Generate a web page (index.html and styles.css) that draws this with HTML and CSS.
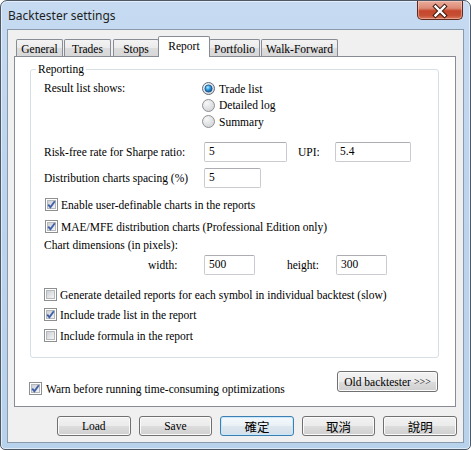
FILE: index.html
```html
<!DOCTYPE html>
<html>
<head>
<meta charset="utf-8">
<link rel="stylesheet" href="styles.css">
</head>
<body>
<div class="window">
  <div class="titlebar">
    <span class="title">Backtester settings</span>
    <div class="close">
      <svg width="46" height="19" viewBox="0 0 46 19">
        <path d="M18.5 5.5 L27.5 14.5 M27.5 5.5 L18.5 14.5" stroke="#3b1a12" stroke-width="4.4" stroke-linecap="square" fill="none"/>
        <path d="M18.5 5.5 L27.5 14.5 M27.5 5.5 L18.5 14.5" stroke="#ffffff" stroke-width="2.4" stroke-linecap="square" fill="none"/>
      </svg>
    </div>
  </div>
  <div class="client">
    <div class="tabs">
      <div class="tab t-general">General</div>
      <div class="tab t-trades">Trades</div>
      <div class="tab t-stops">Stops</div>
      <div class="tab active t-report">Report</div>
      <div class="tab t-portfolio">Portfolio</div>
      <div class="tab t-walk">Walk-Forward</div>
    </div>
    <div class="panel">
      <div class="group">
        <span class="group-label">Reporting</span>
        <div class="result">
          <div class="label-col line">Result list shows:</div>
          <div class="radios">
            <div class="radio-row"><svg class="radio" width="13" height="13" viewBox="0 0 13 13"><use href="#radio-on"/></svg><span>Trade list</span></div>
            <div class="radio-row"><svg class="radio" width="13" height="13" viewBox="0 0 13 13"><use href="#radio-off"/></svg><span>Detailed log</span></div>
            <div class="radio-row"><svg class="radio" width="13" height="13" viewBox="0 0 13 13"><use href="#radio-off"/></svg><span>Summary</span></div>
          </div>
        </div>
        <div class="field-row r-sharpe">
          <div class="label-col">Risk-free rate for Sharpe ratio:</div>
          <div class="input w-sharpe">5</div>
          <div class="upi-label">UPI:</div>
          <div class="input w-upi">5.4</div>
        </div>
        <div class="field-row r-spacing">
          <div class="label-col">Distribution charts spacing (%)</div>
          <div class="input w-spacing">5</div>
        </div>
        <div class="check-row c-enable"><svg class="cb" width="13" height="13" viewBox="0 0 13 13"><use href="#cb-on"/></svg><span>Enable user-definable charts in the reports</span></div>
        <div class="check-row c-mae"><svg class="cb" width="13" height="13" viewBox="0 0 13 13"><use href="#cb-on"/></svg><span>MAE/MFE distribution charts (Professional Edition only)</span></div>
        <div class="line dims">Chart dimensions (in pixels):</div>
        <div class="field-row r-dims">
          <div class="dim-label">width:</div>
          <div class="input w-dim">500</div>
          <div class="height-label">height:</div>
          <div class="input w-dim">300</div>
        </div>
        <div class="check-row c-generate"><svg class="cb" width="13" height="13" viewBox="0 0 13 13"><use href="#cb-off"/></svg><span>Generate detailed reports for each symbol in individual backtest (slow)</span></div>
        <div class="check-row c-trade"><svg class="cb" width="13" height="13" viewBox="0 0 13 13"><use href="#cb-on"/></svg><span>Include trade list in the report</span></div>
        <div class="check-row c-formula"><svg class="cb" width="13" height="13" viewBox="0 0 13 13"><use href="#cb-off"/></svg><span>Include formula in the report</span></div>
      </div>
      <div class="bottom-row">
        <div class="check-row c-warn"><svg class="cb" width="13" height="13" viewBox="0 0 13 13"><use href="#cb-on"/></svg><span>Warn before running time-consuming optimizations</span></div>
        <div class="btn old">Old backtester <span class="arrows">&gt;&gt;&gt;</span></div>
      </div>
    </div>
    <div class="buttons">
      <div class="btn dlg">Load</div>
      <div class="btn dlg">Save</div>
      <div class="btn dlg default cjk">確定</div>
      <div class="btn dlg cjk">取消</div>
      <div class="btn dlg cjk">說明</div>
    </div>
  </div>
</div>

<svg width="0" height="0" class="defs">
  <defs>
    <linearGradient id="cbfill" x1="0" y1="0" x2="1" y2="1">
      <stop offset="0" stop-color="#c9ccd1"/>
      <stop offset="1" stop-color="#f7f7f7"/>
    </linearGradient>
    <radialGradient id="rfill" cx="0.35" cy="0.3" r="0.8">
      <stop offset="0" stop-color="#f8f8f8"/>
      <stop offset="1" stop-color="#cfd1d4"/>
    </radialGradient>
    <radialGradient id="rdot" cx="0.4" cy="0.35" r="0.7">
      <stop offset="0" stop-color="#b9ecff"/>
      <stop offset="0.45" stop-color="#2f9fe3"/>
      <stop offset="1" stop-color="#0b4c8c"/>
    </radialGradient>
    <g id="cb-off">
      <rect x="0.5" y="0.5" width="12" height="12" fill="#ffffff" stroke="#8e8f8f"/>
      <rect x="2.5" y="2.5" width="8" height="8" fill="url(#cbfill)" stroke="#b5b8bd"/>
    </g>
    <g id="cb-on">
      <rect x="0.5" y="0.5" width="12" height="12" fill="#ffffff" stroke="#8e8f8f"/>
      <rect x="2.5" y="2.5" width="8" height="8" fill="url(#cbfill)" stroke="#b5b8bd"/>
      <path d="M3.2 6.6 L5.4 9.2 L9.8 3.2" stroke="#4060a8" stroke-width="1.9" fill="none"/>
    </g>
    <g id="radio-off">
      <circle cx="6.5" cy="6.5" r="6" fill="url(#rfill)" stroke="#8f9194"/>
    </g>
    <g id="radio-on">
      <circle cx="6.5" cy="6.5" r="6" fill="url(#rfill)" stroke="#5c6d80"/>
      <circle cx="6.5" cy="6.5" r="3.6" fill="url(#rdot)" stroke="#1a4f86" stroke-width="0.8"/>
    </g>
  </defs>
</svg>
</body>
</html>
```

FILE: styles.css
```css
* { box-sizing: border-box; }
html, body { margin: 0; padding: 0; background: #ffffff; }
body { width: 471px; height: 450px; overflow: hidden; }
.defs { position: absolute; width: 0; height: 0; }

.window {
  width: 471px;
  height: 450px;
  border: 1px solid #4d5966;
  border-radius: 7px 7px 5px 5px;
  background: linear-gradient(180deg, #c6dbf1 0%, #bcd4ee 40%, #b9d2ec 100%);
  padding: 0 6px 6px 6px;
  display: flex;
  flex-direction: column;
  box-shadow: inset 0 0 0 1px rgba(255,255,255,0.55);
}

.titlebar {
  height: 28px;
  display: flex;
  justify-content: space-between;
  align-items: flex-start;
}
.title {
  font-family: "Noto Sans", "Open Sans", sans-serif;
  font-size: 12px;
  color: #1e1e1e;
  margin-left: 1px;
  margin-top: 6px;
}
.close {
  width: 46px;
  height: 19px;
  margin-right: 1px;
  border: 1px solid #5f2a1d;
  border-top: none;
  border-radius: 0 0 5px 5px;
  background: linear-gradient(180deg, #e9ad9c 0%, #dc8a74 40%, #c5462c 55%, #c64f33 80%, #d9775a 100%);
  box-shadow: inset 0 0 0 1px rgba(255,220,210,0.45);
  overflow: hidden;
}
.close svg { display: block; margin-left: -1px; }

.client {
  height: 414px;
  border: 1px solid #8a9aad;
  background: #f0f0f0;
  padding: 6px 6px 0 6px;
  font-family: "Liberation Serif", "Times New Roman", serif;
  font-size: 11.5px;
  color: #000;
}

.tabs {
  display: flex;
  align-items: flex-end;
  height: 20px;
  padding-left: 2px;
  position: relative;
  z-index: 2;
}
.tab {
  height: 17px;
  border: 1px solid #898c95;
  border-bottom: none;
  border-radius: 2px 2px 0 0;
  background: linear-gradient(180deg, #f3f3f3 0%, #ebebeb 50%, #dcdcdc 51%, #d8d8d8 100%);
  display: flex;
  align-items: center;
  justify-content: center;
  padding-top: 2px;
}
.t-general { width: 47px; }
.t-trades { width: 47px; margin-left: 1px; }
.t-stops { width: 46px; margin-left: 2px; }
.t-report { width: 52px; }
.t-portfolio { width: 51px; }
.t-walk { width: 77px; margin-left: 1px; }
.tab.active {
  height: 21px;
  margin-bottom: -1px;
  background: #ffffff;
  margin-left: -1px;
  margin-right: -1px;
  padding-top: 0;
  padding-bottom: 3px;
  position: relative;
  z-index: 3;
}

.panel {
  margin-right: 1px;
  height: 351px;
  border: 1px solid #898c95;
  background: #ffffff;
  padding: 12px 16px 0 15px;
  position: relative;
  z-index: 1;
}

.group {
  position: relative;
  width: 409px;
  border: 1px solid #d5dfe5;
  border-radius: 3px;
  padding: 10px 0 13px 13px;
}
.group-label {
  position: absolute;
  left: 5px;
  top: -9px;
  padding: 0 2px;
  background: #ffffff;
  line-height: 17px;
}

.line { line-height: 17px; height: 17px; white-space: nowrap; }

.result { display: flex; }
.label-col { width: 160px; white-space: nowrap; }
.result .label-col { width: 158px; }
.radios { display: flex; flex-direction: column; }
.radio-row {
  height: 17px;
  display: flex;
  align-items: center;
}
.radio-row:nth-child(2) { height: 16px; }
.radio-row .radio { display: block; margin-right: 4px; }

.field-row {
  display: flex;
  align-items: center;
  height: 20px;
  white-space: nowrap;
}
.r-sharpe { margin-top: 12px; }
.r-spacing { margin-top: 6px; }
.input {
  height: 20px;
  border: 1px solid #c9cbd0;
  border-top-color: #abadb3;
  border-radius: 2px;
  background: #ffffff;
  padding: 0 0 0 4px;
  line-height: 17px;
}
.w-sharpe { width: 83px; }
.upi-label { width: 37px; margin-left: 11px; }
.w-upi { width: 76px; }
.w-spacing { width: 57px; }

.check-row {
  height: 17px;
  display: flex;
  align-items: center;
  white-space: nowrap;
}
.check-row .cb { display: block; margin-right: 3px; }
.c-enable { margin-top: 8px; margin-left: 1px; }
.c-mae { margin-top: 5px; margin-left: 1px; }
.dims { margin-top: 2px; }
.r-dims { margin-top: 1px; }
.dim-label { width: 56px; margin-left: 104px; }
.w-dim { width: 51px; }
.height-label { width: 49px; margin-left: 32px; }
.c-generate { margin-top: 11px; }
.c-trade { margin-top: 3px; }
.c-formula { margin-top: 4px; }

.bottom-row {
  display: flex;
  justify-content: space-between;
  align-items: flex-start;
  margin-top: 13px;
  margin-left: -1px;
  width: 409px;
}
.c-warn { margin-top: 9px; }
.c-warn .cb { margin-right: 4px; }

.btn {
  height: 21px;
  border: 1px solid #707070;
  border-radius: 3px;
  background: linear-gradient(180deg, #f2f2f2 0%, #ebebeb 50%, #dddddd 51%, #cfcfcf 100%);
  box-shadow: inset 0 0 0 1px #fbfbfb;
  display: flex;
  align-items: center;
  justify-content: center;
  white-space: nowrap;
}
.old { width: 101px; }
.arrows { font-size: 10px; margin-left: 3px; }

.buttons {
  display: flex;
  margin-top: 9px;
  padding-left: 43px;
  gap: 8px;
}
.dlg { width: 74px; height: 20px; }
.cjk { font-family: "Noto Sans CJK TC", "Noto Sans CJK SC", sans-serif; font-size: 12.5px; }
.default {
  border-color: #3c7fb1;
  background: linear-gradient(180deg, #f4f8fb 0%, #eaf1f6 50%, #dde7ef 51%, #d3dfe9 100%);
  box-shadow: inset 0 0 0 1px #c8e7fa;
}
```
